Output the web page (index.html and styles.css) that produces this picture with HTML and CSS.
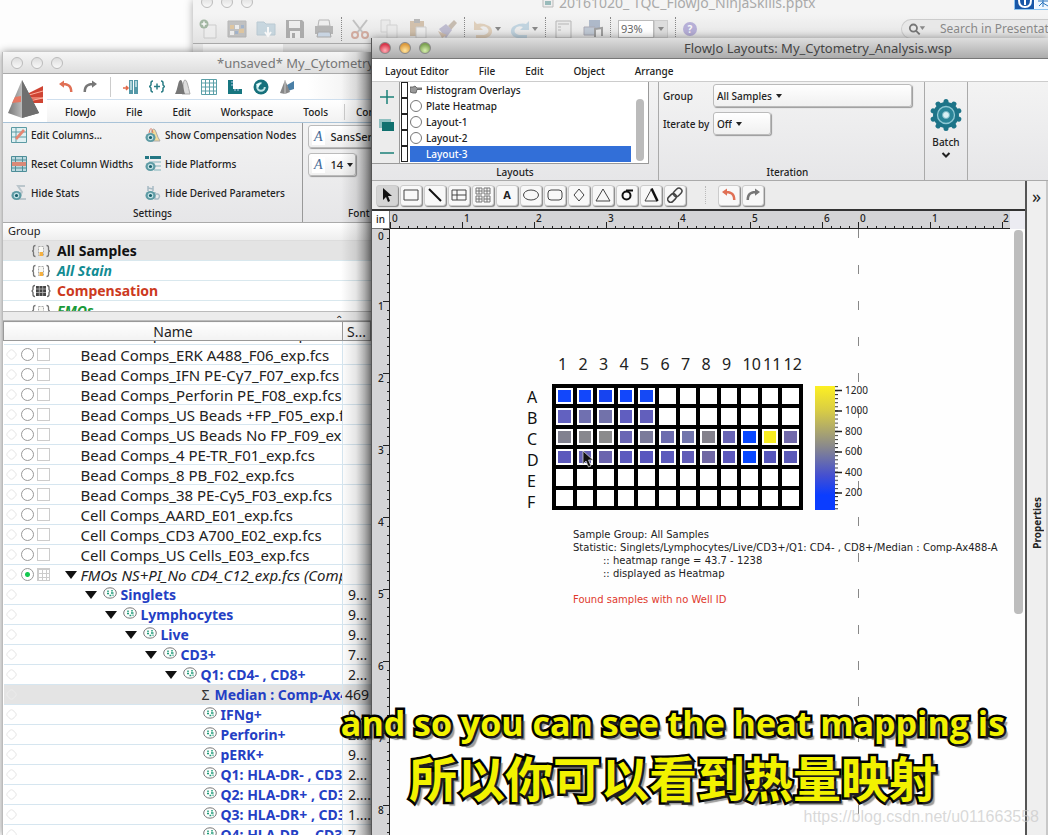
FILE: index.html
```html
<!DOCTYPE html>
<html lang="en">
<head>
<meta charset="utf-8">
<title>FlowJo Layouts: My_Cytometry_Analysis.wsp</title>
<link rel="stylesheet" href="styles.css">
</head>
<body>
<svg class="defs" aria-hidden="true">
  <linearGradient id="pyr" x1="0" x2="1"><stop offset="0" stop-color="#777"/><stop offset=".45" stop-color="#bbb"/><stop offset=".5" stop-color="#888"/><stop offset="1" stop-color="#555"/></linearGradient>
  <symbol id="undo" viewBox="0 0 16 16"><path d="M1 5l5-3.500v2.400c5 0 8.500 2.500 8.500 9h-2.500c0-4.500-2-6.500-6-6.500v2.300z" fill="#e07055"/></symbol>
  <symbol id="redo" viewBox="0 0 16 16"><path d="M15 5l-5-3.500v2.400c-5 0-8.500 2.500-8.500 9h2.500c0-4.500 2-6.500 6-6.500v2.300z" fill="#777"/></symbol>
  <symbol id="cell" viewBox="0 0 14 12"><ellipse cx="7" cy="6" rx="6.300" ry="5.200" fill="#fdfffe" stroke="#777"/><path d="M5 3.500v1.500M9 3v1.600M4 6.500h2M8 6h2.500M6.500 8.500h1.800M9.500 8.200h1" stroke="#1f9a78" stroke-width="1.500"/></symbol>
  <symbol id="tube" viewBox="0 0 20 14"><path d="M4.500 1.500q-2 0-2 2v2q0 1.500-1.500 1.500 1.500 0 1.500 1.500v2q0 2 2 2M15.500 1.500q2 0 2 2v2q0 1.500 1.500 1.500-1.500 0-1.500 1.500v2q0 2-2 2" fill="none" stroke="#777" stroke-width="1.300"/><path d="M7.500 2.500h5v9h-5z" fill="#f8f8f4" stroke="#aaa" stroke-dasharray="2 1"/><path d="M8.500 8h3.500v4h-3.500z" fill="#f5b040"/></symbol>
  <symbol id="plate" viewBox="0 0 20 14"><path d="M4 1.500q-2 0-2 2v2L1 7l1 1.500v2q0 2 2 2M16 1.500q2 0 2 2v2L19 7l-1 1.500v2q0 2-2 2" fill="none" stroke="#666" stroke-width="1.300"/><path d="M5 2h10v10H5z" fill="#444"/><path d="M5 5h10M5 8.500h10M8.300 2v10M11.700 2v10" stroke="#bbb" stroke-width=".8"/></symbol>
  <symbol id="eye" viewBox="0 0 12 12"><ellipse cx="6" cy="6" rx="5.500" ry="5" fill="#5d9ba4"/><circle cx="6" cy="6" r="3" fill="#c4e2e6"/><circle cx="6" cy="6" r="1.700" fill="#19606c"/></symbol>
  <symbol id="pyramid" viewBox="0 0 40 42"><path d="M20 16l16-8v17l-14 0z" fill="#cf4433"/><path d="M22 17l14-4M22 20h14M22 23l14-3" stroke="#ffb09c" stroke-width="1"/><path d="M15 2L1 35l14 5 17-5z" fill="url(#pyr)"/><path d="M15 2l0 38 17-5z" fill="#6f6f6f"/><path d="M8 19l6-1v6l-9 1z" fill="#e67863"/></symbol>
</svg>

<main class="desktop">
  <section class="window deck" aria-label="Presentation">
    <div class="deck-title"><i class="lights pale"><b></b><b></b><b></b></i><span class="deck-name"><svg width="14" height="12" viewBox="0 0 14 12"><path d="M2 0h10v10H2z" fill="#eee" stroke="#bbb"/><path d="M4 4h6v4H4z" fill="#9bb"/></svg>20161020_ TQC_FlowJo_NinjaSkills.pptx</span></div>
    <div class="deck-tools">
      <button aria-label="New"><svg width="18" height="20" viewBox="0 0 18 20"><path d="M5 6h12v13H5z" fill="#eee" stroke="#bbb"/><circle cx="5" cy="5" r="4.500" fill="#7b9a7b"/><path d="M5 2.500v5M2.500 5h5" stroke="#fff" stroke-width="1.500"/></svg></button>
      <button aria-label="Gallery"><svg width="20" height="20" viewBox="0 0 20 20"><path d="M1 2h18v16H1z" fill="#aaa" stroke="#999"/><path d="M3 6h4v4H3zM12 10h5v4h-5z" fill="#d8b27a"/><path d="M8 6h4v4H8zM3 12h4v4H3z" fill="#eee"/><path d="M14 6h3v3h-3zM8 12h3v3H8z" fill="#7c96b8"/></svg></button>
      <button aria-label="Open"><svg width="20" height="20" viewBox="0 0 20 20"><path d="M1 3h7l2 2h9v11H1z" fill="#b4cbd8" stroke="#a0b8c6"/><path d="M12 8v8M9 13l3 4 3-4" fill="none" stroke="#fff" stroke-width="2"/></svg></button>
      <button aria-label="Save"><svg width="20" height="20" viewBox="0 0 20 20"><path d="M1 1h16l2 2v16H1z" fill="#8c8c8c"/><path d="M4 2h11v7H4zM5 12h10v7H5z" fill="#eee"/><path d="M7 14h3v5H7z" fill="#888"/></svg></button>
      <button aria-label="Print"><svg width="20" height="20" viewBox="0 0 20 20"><path d="M5 1h10l1 6H4z" fill="#eee" stroke="#999"/><path d="M1 7h18v8H1z" fill="#999"/><path d="M4 13h12l1 5H3z" fill="#b9cbe0" stroke="#888"/></svg></button>
      <i class="dots"></i>
      <button aria-label="Cut"><svg width="20" height="20" viewBox="0 0 20 20"><path d="M3 1l10 13M17 1L7 14" stroke="#aaa" stroke-width="2"/><g fill="none" stroke="#c48a78" stroke-width="2"><circle cx="5" cy="16" r="3"/><circle cx="15" cy="16" r="3"/></g></svg></button>
      <button aria-label="Copy"><svg width="20" height="20" viewBox="0 0 20 20" fill="#e8e8e8" stroke="#c4c4c4"><path d="M2 1h9v12H2z"/><path d="M8 6h10v13H8z"/></svg></button>
      <button aria-label="Paste"><svg width="18" height="20" viewBox="0 0 18 20"><path d="M1 2h14v15H1z" fill="#c3a98a"/><path d="M5 0h6v4H5z" fill="#999"/><path d="M7 8h10v11H7z" fill="#eee" stroke="#bbb"/></svg></button>
      <button aria-label="Format"><svg width="20" height="20" viewBox="0 0 20 20"><path d="M11 7l6-6 3 3-6 7z" fill="#b2a290"/><path d="M2 10l7-5 6 6-6 8z" fill="#a6a2c0"/><path d="M1 12l9 4-5 3z" fill="#c4a88e"/></svg></button>
      <i class="dots"></i>
      <button aria-label="Undo"><svg width="20" height="20" viewBox="0 0 20 20"><path d="M1 2v9h9L7 8q6-2 8 2t-4 6H3v3h9c8-1 9-9 4-12S6 4 4 5z" fill="#d6bea0"/></svg></button><i class="tri"></i>
      <button aria-label="Redo"><svg width="20" height="20" viewBox="0 0 20 20"><path d="M19 2v9h-9l3-3q-6-2-8 2t4 6h8v3H8c-8-1-9-9-4-12s10-3 12-2z" fill="#a9c6d8"/></svg></button><i class="tri"></i>
      <i class="dots"></i>
      <button aria-label="Form"><svg width="18" height="20" viewBox="0 0 18 20"><path d="M1 2h15v17H1z" fill="#e8e8e8" stroke="#999"/><path d="M3 5h11M3 8h3M3 11h3" stroke="#999"/></svg></button>
      <button aria-label="Media"><svg width="20" height="20" viewBox="0 0 20 20"><path d="M6 1h11v9H6z" fill="#8c9db6"/><path d="M1 8h11v8H1z" fill="#a9b6c8" stroke="#889"/><path d="M12 18v-8l7-1v8" stroke="#777" fill="none" stroke-width="2"/></svg></button>
      <i class="dots"></i>
      <input class="percent" value="93%" aria-label="Zoom"><i class="percent-arrow"><i class="tri"></i></i>
      <i class="dots"></i>
      <button aria-label="Help" class="help">?</button>
      <label class="search"><svg width="20" height="14" viewBox="0 0 20 14"><circle cx="6" cy="6" r="4" fill="none" stroke="#777" stroke-width="2"/><path d="M9 9l4 4" stroke="#777" stroke-width="2"/><path d="M13 4h6l-3 4z" fill="#888"/></svg><input placeholder="Search in Presentation" aria-label="Search in Presentation"></label>
    </div>
    <div class="deck-tabs"></div>
  </section>

  <aside class="badge"><svg width="19" height="9" viewBox="0 0 19 9"><path d="M0 0h19v9H0z" fill="#1857a8"/><path d="M4 0q0 7 6 7t6-7M10 0v5" fill="none" stroke="#fff" stroke-width="2"/></svg><svg width="13" height="9" viewBox="0 0 13 9"><path d="M0 0h13v9H0z" fill="#eef7ff"/><path d="M3 1h10M8 0v7M8 2L4 6M8 3l5 3" stroke="#2a75bd" fill="none"/></svg></aside>

  <section class="window workspace" aria-label="Workspace">
    <header class="bar"><i class="lights pale"><b></b><b></b><b></b></i><h1>*unsaved* My_Cytometry_Analysis.wsp</h1></header>
    <div class="ws-top">
      <svg class="logo" viewBox="0 0 40 42"><use href="#pyramid"/></svg>
      <div class="ws-bars">
        <div class="quick">
          <button aria-label="Undo"><svg><use href="#undo"/></svg></button><button aria-label="Redo"><svg><use href="#redo"/></svg></button><i class="vline"></i>
          <button aria-label="Add samples"><svg viewBox="0 0 16 16"><path d="M6 1h4v14H6zM11 1h4v14h-4z" fill="#5599a8"/><path d="M8 2v9M13 2v6" stroke="#cfe7ec" stroke-width="1.500"/><path d="M0 9h4M3 7l2 2-2 2" stroke="#e26a4a" fill="none" stroke-width="1.500"/></svg></button>
          <button aria-label="Create group"><svg viewBox="0 0 16 16" fill="none" stroke="#2a7d85" stroke-width="1.500"><path d="M4 2Q2 2 2 4v2L.500 7.500 2 9v2q0 2 2 2M12 2q2 0 2 2v2l1.500 1.500L14 9v2q0 2-2 2M8 4.500v6M5 7.500h6"/></svg></button>
          <button aria-label="Histograms"><svg viewBox="0 0 16 16"><path d="M7 15C8 9 8 1 10 1s3 6 5 14z" fill="#ddd" stroke="#aaa"/><path d="M0 15C3 10 3 1 5.500 1S8 9 10 15z" fill="#777"/></svg></button>
          <button aria-label="Table"><svg viewBox="0 0 16 16" fill="none" stroke="#5ba0a8"><path d="M.500.500h15v15H.500zM.500 4h15M.500 8h15M.500 12h15M4.500.500v15M8.500.500v15M12.500.500v15"/></svg></button>
          <button aria-label="Layout"><svg viewBox="0 0 16 16"><path d="M1 1h5v9h9v5H1z" fill="#167680"/><path d="M6 3H4M6 6H4M8 10v2M11 10v2" stroke="#bce"/></svg></button>
          <button aria-label="Refresh"><svg viewBox="0 0 16 16"><circle cx="8" cy="8" r="7.500" fill="#16717c"/><circle cx="8" cy="8" r="3.800" fill="none" stroke="#bfe4e6" stroke-width="2" stroke-dasharray="18 6"/><path d="M3 5l5-1-3 5z" fill="#e8ffff"/></svg></button>
          <button aria-label="Preferences"><svg viewBox="0 0 16 16"><path d="M8 6l7-4v8l-6 2z" fill="#4b7fa6"/><path d="M6 1L1 14l5 1 5-2z" fill="#888"/><path d="M6 1v14" stroke="#ccc"/></svg></button>
        </div>
        <nav class="tabs"><a href="#">FlowJo</a><a href="#">File</a><a href="#">Edit</a><a href="#">Workspace</a><a href="#">Tools</a><a href="#" class="next">Configure</a></nav>
      </div>
    </div>
    <div class="ribbon ws-ribbon">
      <div class="settings">
        <div class="cmds">
          <button><svg viewBox="0 0 16 16"><path d="M.500.500h15v15H.500z" fill="#dff0f2" stroke="#5c9aa3"/><path d="M.500 5h15M.500 10h15M5 .500v15" stroke="#5c9aa3"/><path d="M4 11l8-9 2 2-8 9z" fill="#e58672"/></svg>Edit Columns...</button>
          <button><svg viewBox="0 0 16 16"><path d="M6 5q3-6 5 0t4 9H6z" fill="#f3dd9a" stroke="#aaa"/><path d="M4 6q2-9 4 0" fill="none" stroke="#d87a60"/><use href="#eye" y="5" width="11" height="11"/></svg>Show Compensation Nodes</button>
          <button><svg viewBox="0 0 16 16"><path d="M.500.500h15v15H.500z" fill="#bcd9df" stroke="#4e8e99"/><path d="M4.500.500v15M11.500.500v15M.500 4h15M.500 12h15" stroke="#4e8e99"/><path d="M1 6h14v4H1z" fill="#d98978"/></svg>Reset Column Widths</button>
          <button><svg viewBox="0 0 16 16"><path d="M0 0h4v3H0zM5 0h11v3H5z" fill="#247784"/><path d="M4 6h12M8 10h8M9 14h7" stroke="#7fb3bb"/><use href="#eye" y="5" width="11" height="11"/></svg>Hide Platforms</button>
          <button><svg viewBox="0 0 16 16"><path d="M14 1H7l4 6-4 7h8" fill="none" stroke="#bbc6cc" stroke-width="2"/><use href="#eye" y="5" width="11" height="11"/></svg>Hide Stats</button>
          <button><svg viewBox="0 0 16 16"><path d="M3 1v5M8 1v5M3 3l5 1M10 7v7h3q3-3 0-5h-2" fill="none" stroke="#a7bac4" stroke-width="1.500"/><use href="#eye" y="5" width="11" height="11"/></svg>Hide Derived Parameters</button>
        </div>
        <p class="caption">Settings</p>
      </div>
      <div class="fonts">
        <button class="box"><em>A</em>SansSerif</button>
        <button class="box small"><em>A</em>14<i class="tri"></i></button>
        <p class="caption">Font</p>
      </div>
    </div>
    <div class="groups">
      <p class="group-head">Group</p>
      <ul>
        <li class="on"><svg><use href="#tube"/></svg>All Samples</li>
        <li class="stain"><svg><use href="#tube"/></svg>All Stain</li>
        <li class="comp"><svg><use href="#plate"/></svg>Compensation</li>
        <li class="fmo"><svg><use href="#tube"/></svg>FMOs</li>
      </ul>
    </div>
    <div class="splitter">⌃</div>
    <div class="samples">
      <table>
        <colgroup><col class="c-name"><col></colgroup>
        <thead><tr><th>Name</th><th>S...</th></tr></thead>
        <tbody>
        <tr class="peek"><td><div class="cut"><span>Bead Comps_CD8 A700_F04_exp.fcs</span></div></td><td></td></tr>
        <tr><td><div><i class="gem"></i><input type="radio" aria-label="Select"><input type="checkbox" aria-label="Mark"><span>Bead Comps_ERK A488_F06_exp.fcs</span></div></td><td></td></tr>
        <tr><td><div><i class="gem"></i><input type="radio" aria-label="Select"><input type="checkbox" aria-label="Mark"><span>Bead Comps_IFN PE-Cy7_F07_exp.fcs</span></div></td><td></td></tr>
        <tr><td><div><i class="gem"></i><input type="radio" aria-label="Select"><input type="checkbox" aria-label="Mark"><span>Bead Comps_Perforin PE_F08_exp.fcs</span></div></td><td></td></tr>
        <tr><td><div><i class="gem"></i><input type="radio" aria-label="Select"><input type="checkbox" aria-label="Mark"><span>Bead Comps_US Beads +FP_F05_exp.fcs</span></div></td><td></td></tr>
        <tr><td><div><i class="gem"></i><input type="radio" aria-label="Select"><input type="checkbox" aria-label="Mark"><span>Bead Comps_US Beads No FP_F09_exp.fcs</span></div></td><td></td></tr>
        <tr><td><div><i class="gem"></i><input type="radio" aria-label="Select"><input type="checkbox" aria-label="Mark"><span>Bead Comps_4 PE-TR_F01_exp.fcs</span></div></td><td></td></tr>
        <tr><td><div><i class="gem"></i><input type="radio" aria-label="Select"><input type="checkbox" aria-label="Mark"><span>Bead Comps_8 PB_F02_exp.fcs</span></div></td><td></td></tr>
        <tr><td><div><i class="gem"></i><input type="radio" aria-label="Select"><input type="checkbox" aria-label="Mark"><span>Bead Comps_38 PE-Cy5_F03_exp.fcs</span></div></td><td></td></tr>
        <tr><td><div><i class="gem"></i><input type="radio" aria-label="Select"><input type="checkbox" aria-label="Mark"><span>Cell Comps_AARD_E01_exp.fcs</span></div></td><td></td></tr>
        <tr><td><div><i class="gem"></i><input type="radio" aria-label="Select"><input type="checkbox" aria-label="Mark"><span>Cell Comps_CD3 A700_E02_exp.fcs</span></div></td><td></td></tr>
        <tr><td><div><i class="gem"></i><input type="radio" aria-label="Select"><input type="checkbox" aria-label="Mark"><span>Cell Comps_US Cells_E03_exp.fcs</span></div></td><td></td></tr>
        <tr class="open"><td><div><i class="gem"></i><input type="radio" checked aria-label="Select"><input type="checkbox" class="mesh" aria-label="Mark"><i class="twist"></i><span>FMOs NS+PI_No CD4_C12_exp.fcs (Compensated)</span></div></td><td></td></tr>
        <tr class="pop d1"><td><div><i class="gem"></i><i class="twist"></i><svg><use href="#cell"/></svg><span>Singlets</span></div></td><td>9...</td></tr>
        <tr class="pop d2"><td><div><i class="gem"></i><i class="twist"></i><svg><use href="#cell"/></svg><span>Lymphocytes</span></div></td><td>9...</td></tr>
        <tr class="pop d3"><td><div><i class="gem"></i><i class="twist"></i><svg><use href="#cell"/></svg><span>Live</span></div></td><td>9...</td></tr>
        <tr class="pop d4"><td><div><i class="gem"></i><i class="twist"></i><svg><use href="#cell"/></svg><span>CD3+</span></div></td><td>7...</td></tr>
        <tr class="pop d5"><td><div><i class="gem"></i><i class="twist"></i><svg><use href="#cell"/></svg><span>Q1: CD4- , CD8+</span></div></td><td>2...</td></tr>
        <tr class="pop leaf stat"><td><div><i class="gem"></i><b class="sigma">Σ</b><span>Median : Comp-Ax488-A</span></div></td><td>469</td></tr>
        <tr class="pop leaf"><td><div><i class="gem"></i><svg><use href="#cell"/></svg><span>IFNg+</span></div></td><td>9...</td></tr>
        <tr class="pop leaf"><td><div><i class="gem"></i><svg><use href="#cell"/></svg><span>Perforin+</span></div></td><td>2...</td></tr>
        <tr class="pop leaf"><td><div><i class="gem"></i><svg><use href="#cell"/></svg><span>pERK+</span></div></td><td>9...</td></tr>
        <tr class="pop leaf"><td><div><i class="gem"></i><svg><use href="#cell"/></svg><span>Q1: HLA-DR- , CD38+</span></div></td><td>2...</td></tr>
        <tr class="pop leaf"><td><div><i class="gem"></i><svg><use href="#cell"/></svg><span>Q2: HLA-DR+ , CD38+</span></div></td><td>2....</td></tr>
        <tr class="pop leaf"><td><div><i class="gem"></i><svg><use href="#cell"/></svg><span>Q3: HLA-DR+ , CD38-</span></div></td><td>1....</td></tr>
        <tr class="pop leaf"><td><div><i class="gem"></i><svg><use href="#cell"/></svg><span>Q4: HLA-DR- , CD38-</span></div></td><td>7...</td></tr>
        </tbody>
      </table>
    </div>
  </section>

  <section class="window layouts" aria-label="Layout editor">
    <header class="bar active"><i class="lights"><b class="r"></b><b class="y"></b><b class="g"></b></i><h1>FlowJo Layouts: My_Cytometry_Analysis.wsp</h1></header>
    <nav class="menu"><a href="#">Layout Editor</a><a href="#">File</a><a href="#">Edit</a><a href="#">Object</a><a href="#">Arrange</a></nav>
    <div class="ribbon lay-ribbon">
      <div class="lay-group">
        <div class="lay-pick">
          <div class="lay-btns">
            <button aria-label="Add layout"><svg viewBox="0 0 16 16"><path d="M8 1v14M1 8h14" stroke="#1b8178" stroke-width="1.500"/></svg></button>
            <button aria-label="Duplicate layout"><svg viewBox="0 0 16 16"><path d="M0 2h12v9H0z" fill="#8fc0c0"/><path d="M3 5h12v9H3z" fill="#10706e"/></svg></button>
            <button aria-label="Remove layout"><svg viewBox="0 0 16 16"><path d="M1 8h14" stroke="#1b8178" stroke-width="1.500"/></svg></button>
          </div>
          <ul class="lay-list">
            <li><input type="checkbox" aria-label="Batch Histogram Overlays"><svg width="12" height="10" viewBox="0 0 12 10"><path d="M0 2h3l2-1 2 2h5v1.500H7L6 8H3L0 7z" fill="#999" stroke="#555" stroke-width=".8"/></svg>Histogram Overlays</li>
            <li><input type="checkbox" aria-label="Batch Plate Heatmap"><input type="radio" name="lay" aria-label="Plate Heatmap">Plate Heatmap</li>
            <li><input type="checkbox" aria-label="Batch Layout-1"><input type="radio" name="lay" aria-label="Layout-1">Layout-1</li>
            <li><input type="checkbox" aria-label="Batch Layout-2"><input type="radio" name="lay" aria-label="Layout-2">Layout-2</li>
            <li class="on"><input type="checkbox" aria-label="Batch Layout-3"><span>Layout-3</span></li>
          </ul>
          <i class="list-scroll"></i>
        </div>
        <p class="caption">Layouts</p>
      </div>
      <div class="iter-group">
        <div class="iter-form">
          <label for="grp">Group</label><span class="box wide"><select id="grp"><option>All Samples</option></select><i class="tri"></i></span>
          <label for="itr">Iterate by</label><span class="box narrow"><select id="itr"><option>Off</option></select><i class="tri"></i></span>
        </div>
        <p class="caption">Iteration</p>
      </div>
      <button class="batch"><svg width="34" height="34" viewBox="-17 -17 34 34"><circle r="13" fill="#1d7488"/><g stroke="#1d7488" stroke-width="5" stroke-linecap="round"><path id="t" d="M0-13.500v27"/><use href="#t" transform="rotate(36)"/><use href="#t" transform="rotate(72)"/><use href="#t" transform="rotate(108)"/><use href="#t" transform="rotate(144)"/></g><circle r="8.500" fill="#2a8598" stroke="#8fc8d4" stroke-width="1.300"/><circle r="3.500" fill="#d9f0f4" stroke="#77b6c4"/></svg>Batch<svg width="10" height="6" viewBox="0 0 10 6"><path d="M1.500 1L5 4.500 8.500 1" fill="none" stroke="#222" stroke-width="2"/></svg></button>
    </div>
    <div class="lay-main">
      <div class="editor">
        <div class="toolbar">
          <button class="on" aria-label="Pointer"><svg viewBox="0 0 16 16"><path d="M4 1v12l3-3 2 5 2-1-2-5h4z" fill="#111"/></svg></button>
          <button aria-label="Rectangle"><svg viewBox="0 0 16 16"><path d="M1 3h14v10H1z"/></svg></button>
          <button aria-label="Line"><svg viewBox="0 0 16 16"><path d="M2 2l12 12" stroke="#111" stroke-width="2"/></svg></button>
          <button aria-label="Table"><svg viewBox="0 0 16 16"><path d="M1 3h14v10H1zM1 8h14M6 3v10"/></svg></button>
          <button aria-label="Grid"><svg viewBox="0 0 16 16"><path d="M1 1h6v6H1zM9 1h6v6H9zM1 9h6v6H1zM9 9h6v6H9zM4 1v6M12 1v6M4 9v6M12 9v6M1 4h6M9 4h6M1 12h6M9 12h6" stroke="#777"/></svg></button>
          <button aria-label="Text" class="glyph">A</button>
          <button aria-label="Ellipse"><svg viewBox="0 0 16 16"><ellipse cx="8" cy="8" rx="7.500" ry="5"/></svg></button>
          <button aria-label="Rounded rectangle"><svg viewBox="0 0 16 16"><rect x="1" y="3" width="14" height="10" rx="3"/></svg></button>
          <button aria-label="Diamond"><svg viewBox="0 0 16 16"><path d="M8 2l5 6-5 6-5-6z"/></svg></button>
          <button aria-label="Triangle"><svg viewBox="0 0 16 16"><path d="M8 2l7 12H1z"/></svg></button>
          <button aria-label="Sigma"><svg viewBox="0 0 16 16"><circle cx="7.500" cy="8.500" r="4" stroke="#111" stroke-width="2"/><path d="M7 3.500h7" stroke="#111" stroke-width="2"/></svg></button>
          <button aria-label="Delta"><svg viewBox="0 0 16 16"><path d="M8.500 2L2 14h12.500z"/><path d="M8.500 1.500l6 12.500" stroke="#111" stroke-width="2.500"/></svg></button>
          <button aria-label="Link"><svg viewBox="0 0 16 16"><g transform="rotate(-45 8 8)"><rect x="-1" y="5" width="9.500" height="6" rx="3" stroke-width="1.500"/><rect x="7" y="5" width="9.500" height="6" rx="3" stroke-width="1.500"/></g></svg></button>
          <i class="gap"></i>
          <button aria-label="Undo"><svg><use href="#undo" stroke="none"/></svg></button>
          <button aria-label="Redo"><svg><use href="#redo" stroke="none"/></svg></button>
        </div>
        <div class="sheet">
          <span class="unit">in</span>
          <svg class="hruler">
            <defs><pattern id="hm" width="9" height="18" patternUnits="userSpaceOnUse"><path d="M.500 15v3" stroke="#222"/></pattern></defs>
            <rect width="100%" height="18" fill="url(#hm)"/>
            <path d="M.500 11v7M72.500 11v7M144.500 11v7M216.500 11v7M288.500 11v7M360.500 11v7M432.500 11v7M468.500 11v7M540.500 11v7M612.500 11v7M0 17.500h700" stroke="#222"/>
            <text x="2" y="11">0</text><text x="74" y="11">1</text><text x="146" y="11">2</text><text x="218" y="11">3</text><text x="290" y="11">4</text><text x="362" y="11">5</text><text x="434" y="11">6</text><text x="470" y="11">0</text><text x="542" y="11">1</text><text x="613" y="11">2</text>
          </svg>
          <i class="corner"></i>
          <svg class="vruler">
            <defs><pattern id="vm" width="18" height="9" patternUnits="userSpaceOnUse"><path d="M15 .500h3" stroke="#222"/></pattern></defs>
            <rect width="18" height="100%" fill="url(#vm)"/>
            <path d="M11 .500h7M11 72.500h7M11 144.500h7M11 216.500h7M11 288.500h7M11 360.500h7M11 432.500h7M11 504.500h7M11 576.500h7M17.500 0v900" stroke="#222"/>
            <text x="6" y="11">0</text><text x="6" y="81">1</text><text x="6" y="153">2</text><text x="6" y="225">3</text><text x="6" y="297">4</text><text x="6" y="369">5</text><text x="6" y="441">6</text><text x="6" y="513">7</text><text x="6" y="585">8</text>
          </svg>
          <div class="canvas">
            <i class="page-edge"></i>
            <figure class="heatmap">
              <div class="cols"><span>1</span><span>2</span><span>3</span><span>4</span><span>5</span><span>6</span><span>7</span><span>8</span><span>9</span><span>10</span><span>11</span><span>12</span></div>
              <div class="rows"><span>A</span><span>B</span><span>C</span><span>D</span><span>E</span><span>F</span></div>
              <div class="wells">
                <i style="--v:#1247fb"></i><i style="--v:#1247fb"></i><i style="--v:#1744f0"></i><i style="--v:#1247fb"></i><i style="--v:#1549f5"></i><i></i><i></i><i></i><i></i><i></i><i></i><i></i>
                <i style="--v:#6261c0"></i><i style="--v:#7070b0"></i><i style="--v:#7272aa"></i><i style="--v:#605ec0"></i><i style="--v:#625fbc"></i><i></i><i></i><i></i><i></i><i></i><i></i><i></i>
                <i style="--v:#81818f"></i><i style="--v:#88888e"></i><i style="--v:#8b8b8c"></i><i style="--v:#6a66b4"></i><i style="--v:#7b7b9a"></i><i style="--v:#6c6cae"></i><i style="--v:#7175ac"></i><i style="--v:#84828c"></i><i style="--v:#6864b4"></i><i style="--v:#0847ff"></i><i style="--v:#f8ec20"></i><i style="--v:#7169aa"></i>
                <i style="--v:#5c59bc"></i><i style="--v:#6562b4"></i><i style="--v:#6b64ae"></i><i style="--v:#5c5abe"></i><i style="--v:#5957be"></i><i style="--v:#5b5abc"></i><i style="--v:#605cb8"></i><i style="--v:#7068a4"></i><i style="--v:#5c58bc"></i><i style="--v:#0847ff"></i><i style="--v:#5555bc"></i><i style="--v:#5a59b8"></i>
                <i></i><i></i><i></i><i></i><i></i><i></i><i></i><i></i><i></i><i></i><i></i><i></i>
                <i></i><i></i><i></i><i></i><i></i><i></i><i></i><i></i><i></i><i></i><i></i><i></i>
              </div>
              <div class="scale"><i class="ramp"></i>
                <svg width="7" height="124" viewBox="0 0 7 124"><defs><pattern id="sm" y="4" width="7" height="4.080" patternUnits="userSpaceOnUse"><path d="M0 .500h3" stroke="#333"/></pattern></defs><path d="M0 0h7v124H0z" fill="url(#sm)"/><path d="M0 4.500h7M0 25h7M0 45.500h7M0 66h7M0 86.500h7M0 107h7" stroke="#222" stroke-width="1.500"/></svg>
                <div class="nums"><span>1200</span><span>1000</span><span>800</span><span>600</span><span>400</span><span>200</span></div>
              </div>
              <figcaption>
                <p>Sample Group: All Samples</p><p>Statistic: Singlets/Lymphocytes/Live/CD3+/Q1: CD4- , CD8+/Median : Comp-Ax488-A</p><p class="in">:: heatmap range = 43.7 - 1238</p><p class="in">:: displayed as Heatmap</p><p class="warn">Found samples with no Well ID</p>
              </figcaption>
            </figure>
            <svg class="pointer" width="12" height="18" viewBox="0 0 12 18"><path d="M1 1v13l3-3 2.500 6 2.500-1-2.500-6H11z" fill="#111" stroke="#ccc" stroke-width=".8"/></svg>
          </div>
          <i class="vscroll"></i>
        </div>
      </div>
      <aside class="props"><button aria-label="Expand">»</button><span>Properties</span></aside>
    </div>
  </section>

  <div class="subtitles"><p>and so you can see the heat mapping is</p><p class="zh" lang="zh">所以你可以看到热量映射</p></div>
  <span class="mark">https://blog.csdn.net/u011663558</span>
</main>
</body>
</html>
```
FILE: styles.css
```css
* { box-sizing: border-box; margin: 0; padding: 0; }
html, body { height: 100%; overflow: hidden; }
body { font: 10px/16px "Noto Sans", "Open Sans", sans-serif; color: #222; }
button, input, select { font: inherit; color: inherit; background: none; border: 0; appearance: none; }
button { display: flex; align-items: center; justify-content: center; }
ul { list-style: none; }
a { color: inherit; text-decoration: none; }
i, em { font-style: normal; }
.defs { position: absolute; width: 0; height: 0; }
.desktop { position: relative; height: 100vh; overflow: hidden; background: #fdfdfd; }
.window { position: absolute; overflow: hidden; display: flex; flex-direction: column; }
.tri { border: 3px solid transparent; border-top: 4px solid #222; border-bottom: 0; }
.vline { width: 1px; height: 20px; background: #ccc; }
.caption { text-align: center; line-height: 16px; }

.lights { display: flex; gap: 8px; }
.lights b { width: 12px; height: 12px; border-radius: 50%; border: 1px solid #888; }
.lights .r { background: radial-gradient(circle at 50% 75%, #ffb0b8, #d8354a 70%); }
.lights .y { background: radial-gradient(circle at 50% 75%, #ffe6a0, #dd9a3c 70%); }
.lights .g { background: radial-gradient(circle at 50% 75%, #d8f0b0, #7da352 70%); }
.lights.pale b { border-color: #bbb; background: linear-gradient(#ddd, #f8f8f8); }

/* presentation window */
.deck { left: 193px; right: 0; top: 0; bottom: 0; background: #ededed; box-shadow: 0 0 8px rgba(0,0,0,.35); color: #aaa; }
.deck-title { height: 14px; display: flex; align-items: flex-start; padding-left: 8px; background: #f4f4f4; }
.deck-title .lights { height: 8px; align-items: flex-end; }
.deck-name { display: flex; gap: 4px; align-items: center; margin-left: 288px; height: 6px; font-size: 14px; white-space: nowrap; }
.deck-tools { height: 30px; display: flex; align-items: center; gap: 8px; padding-left: 4px; background: linear-gradient(#f4f4f4, #e2e2e2); border-bottom: 1px solid #aaa; }
.deck-tools > * { flex: none; }
.deck-tools button { width: 21px; opacity: .65; }
.dots { width: 1px; height: 24px; margin: 0 -1px; border-left: 1px dotted #888; }
.deck-tools .tri { margin-left: -6px; border-top-color: #888; }
.percent { width: 36px; height: 18px; background: #fff; border: 1px solid #bbb; color: #666; padding-left: 2px; font-size: 11px; }
.percent-arrow { width: 14px; height: 18px; margin-left: -8px; background: #ddd; border: 1px solid #ccc; display: flex; align-items: center; justify-content: center; }
.percent-arrow .tri { margin: 0; }
.deck-tools .help { width: 14px; height: 14px; border-radius: 50%; background: #9a8fcc; color: #fff; font-weight: bold; }
.search { margin-left: auto; width: 147px; height: 20px; display: flex; align-items: center; gap: 14px; padding-left: 6px; border: 1px solid #ccc; border-right: 0; border-radius: 10px 0 0 10px; background: #e8e8e8; }
.search input { width: 108px; font-size: 12px; }
.search input::placeholder { color: #8a8a8a; }
.deck-tabs { height: 8px; background: linear-gradient(90deg, #e8e8e8 10px, #f6f6f6 10px 90px, #e4e4e4 90px); }
.badge { position: absolute; right: 0; top: 0; display: flex; gap: 1px; border: 1px solid #8cc4f0; border-top: 0; border-right: 0; background: #fff; }

/* workspace window */
.workspace { left: 2px; top: 52px; bottom: 0; width: 369px; background: #fff; border-left: 1px solid #bbb; box-shadow: 0 0 8px rgba(0,0,0,.45); }
.workspace::after { content: ""; position: absolute; right: 0; top: 0; bottom: 0; width: 30px; background: linear-gradient(90deg, transparent, rgba(0,0,0,.1) 50%, rgba(0,0,0,.45)); pointer-events: none; }
.bar { flex: none; height: 22px; display: flex; align-items: center; padding-left: 8px; background: linear-gradient(#f6f6f6, #dedede); border-bottom: 1px solid #aaa; }
.bar h1 { font-size: 13px; font-weight: normal; color: #777; white-space: nowrap; }
.workspace .bar h1 { margin-left: 154px; }
.ws-top { flex: none; height: 49px; display: flex; background: #fff; border-bottom: 1px solid #a9c3d8; }
.logo { width: 40px; height: 42px; margin: 4px 0 0 4px; flex: none; }
.ws-bars { flex: 1; min-width: 0; }
.quick { height: 26px; display: flex; align-items: center; gap: 10px; padding-left: 11px; border-bottom: 1px solid #cfdfee; background: linear-gradient(90deg, #fff 260px, #ededed); }
.quick button { width: 16px; }
.quick svg { width: 16px; height: 16px; flex: none; }
.quick .vline { margin: 0 2px; }
.quick button:first-child { margin-right: -2px; }
.tabs { height: 22px; display: flex; align-items: center; padding: 1px 0 0 18px; font-weight: 500; background: linear-gradient(#fff, #f2f2f2); }
.tabs a { flex: none; margin-right: 30px; }
.tabs .next { margin-left: -14px; border-left: 1px solid #ccc; padding-left: 11px; }
.ribbon { flex: none; height: 100px; display: flex; background: linear-gradient(#f3f3f3, #e6e6e8); border-bottom: 1px solid #aaa; font-weight: 500; }
.settings { width: 300px; flex: none; display: flex; flex-direction: column; justify-content: space-between; border-right: 1px solid #999; padding-bottom: 1px; }
.cmds { display: grid; grid-template-columns: 134px 1fr; grid-auto-rows: 23px; row-gap: 6px; padding-left: 8px; }
.cmds button { justify-content: flex-start; gap: 4px; white-space: nowrap; }
.cmds svg { width: 16px; height: 16px; flex: none; }
.fonts { flex: 1; display: flex; flex-direction: column; align-items: flex-start; gap: 5px; padding: 2px 0 1px 5px; overflow: hidden; }
.fonts .caption { margin: auto 0 0 40px; }
.box { height: 23px; display: flex; align-items: center; gap: 4px; border: 1px solid #bbb; border-radius: 3px; background: linear-gradient(#fff, #f0f0f0); box-shadow: 1px 1px 1px #999; padding-left: 3px; }
.fonts .box { width: 90px; justify-content: flex-start; gap: 6px; font-size: 11px; }
.fonts .small { width: 48px; }
.fonts .small .tri { margin-left: -2px; }
.box em { font: italic 14px/16px "Liberation Serif", serif; color: #446a96; padding: 0 2px; background: #fff; }
.groups { flex: none; height: 88px; overflow: hidden; }
.group-head { height: 18px; padding-left: 5px; font-size: 11px; background: linear-gradient(#fff, #eee); border-bottom: 1px solid #ddd; }
.groups li { height: 20px; display: flex; align-items: center; gap: 6px; padding-left: 28px; border-bottom: 1px solid #d9e8ee; font-size: 14px; font-weight: bold; color: #111; }
.groups li svg { width: 20px; height: 14px; }
.groups .on { background: #e4e4e4; }
.groups .stain { color: #128b92; font-style: italic; }
.groups .comp { color: #cc3a1e; }
.groups .fmo { color: #1a9a3a; font-style: italic; }
.splitter { flex: none; height: 10px; background: #ececec; border: solid #bbb; border-width: 1px 0; line-height: 14px; padding-left: 332px; overflow: hidden; }
.samples { flex: 1; overflow: hidden; font-size: 14px; }
table { width: 100%; table-layout: fixed; border-collapse: collapse; }
.c-name { width: 339px; }
th { height: 19px; line-height: 17px; font-weight: 400; background: linear-gradient(#fff, #f2f2f2); border: 1px solid #999; }
th:last-child { text-align: left; padding-left: 4px; }
td { height: 20px; line-height: 18px; border-bottom: 1px solid #d6e6f0; overflow: hidden; white-space: nowrap; }
td + td { border-left: 1px solid #d6e6f0; padding-left: 5px; }
td div { display: flex; align-items: center; height: 19px; overflow: hidden; font-size: 15px; }
td div > * { flex: none; }
.peek td, .peek .cut { height: 3px; line-height: 22px; }
.peek .cut { align-items: flex-end; padding-left: 77px; }
.gem { width: 9px; height: 9px; margin: 0 8px 0 3px; border: 1px solid #eaeaea; border-radius: 3px; transform: rotate(45deg); }
td input[type=radio] { width: 13px; height: 13px; border: 1px solid #999; border-radius: 50%; margin-left: -3px; }
td input[type=radio]:checked { background: radial-gradient(circle, #14c850 2px, transparent 3px); }
td input[type=checkbox] { width: 13px; height: 13px; border: 1px solid #ccc; margin: 0 31px 0 3px; }
.open input.mesh { background: repeating-linear-gradient(#ccc 0 1px, transparent 1px 4px), repeating-linear-gradient(90deg, #ccc 0 1px, transparent 1px 4px); margin-right: 15px; }
.open span { font-style: italic; }
.twist { border: 6px solid transparent; border-top: 8px solid #111; border-bottom: 0; }
.open .twist { margin-right: 4px; }
.pop div { color: #2440c4; font-weight: bold; font-size: 14px; }
.pop svg { width: 14px; height: 12px; margin: 0 4px 3px 6px; }
.d1 .twist { margin-left: 61px; }
.d2 .twist { margin-left: 81px; }
.d3 .twist { margin-left: 101px; }
.d4 .twist { margin-left: 121px; }
.d5 .twist { margin-left: 141px; }
.leaf svg { margin-left: 179px; }
.stat { background: #e4e4e4; }
.stat td + td { padding-left: 2px; }
.sigma { width: 12px; margin-left: 178px; margin-right: 1px; font-weight: normal; color: #333; }

/* layout editor window */
.layouts { left: 371px; right: 0; top: 38px; bottom: 0; background: #ececec; border-left: 1px solid #555; box-shadow: 0 0 8px rgba(0,0,0,.4); }
.layouts .bar { height: 21px; padding-left: 7px; background: linear-gradient(#dedede, #acacac); border-bottom: 1px solid #777; position: relative; }
.layouts .bar h1 { position: absolute; left: 0; right: 0; text-align: center; padding-left: 216px; color: #444; }
.menu { flex: none; height: 23px; display: flex; align-items: center; gap: 30px; padding: 1px 0 0 13px; background: #fff; border-bottom: 1px solid #ccc; font-weight: 500; }
.lay-ribbon { height: 99px; }
.lay-group { width: 287px; border-right: 1px solid #aaa; display: flex; flex-direction: column; justify-content: space-between; }
.lay-pick { display: flex; height: 82px; margin-right: 9px; border-right: 1px solid #999; border-bottom: 1px solid #999; background: #fff; }
.lay-btns { width: 28px; flex: none; display: flex; flex-direction: column; justify-content: space-between; padding: 7px 0 2px 7px; background: #ececec; border-right: 1px solid #999; }
.lay-btns svg { width: 16px; height: 16px; }
.lay-btns button { width: 16px; }
.lay-list { flex: 1; overflow: hidden; }
.lay-list li { display: flex; align-items: center; height: 16px; gap: 4px; }
.lay-list input[type=checkbox] { width: 7px; height: 16px; border: 1px solid #222; margin-left: 1px; }
.lay-list input[type=radio] { width: 12px; height: 12px; border: 1px solid #777; border-radius: 50%; margin-left: -2px; }
.lay-list svg { margin-left: -2px; }
.lay-list .on { gap: 2px; }
.lay-list .on span { flex: 1; background: #326fd8; color: #fff; padding-left: 16px; }
.list-scroll { width: 8px; height: 62px; margin: 17px 4px 0 5px; border-radius: 4px; background: #bbb; }
.iter-group { width: 266px; flex: none; padding: 2px 12px 0 4px; border-right: 1px solid #aaa; display: flex; flex-direction: column; justify-content: space-between; }
.iter-form { display: grid; grid-template-columns: 48px 1fr; column-gap: 2px; row-gap: 5px; align-items: center; white-space: nowrap; }
.narrow { width: 58px; }
.batch { width: 43px; flex: none; flex-direction: column; gap: 2px; padding-bottom: 6px; border-right: 1px solid #aaa; font-weight: 500; }
.lay-main { flex: 1; min-height: 0; display: flex; }
.editor { flex: 1; min-width: 0; display: flex; flex-direction: column; border-right: 2px solid #555; }
.toolbar { flex: none; height: 28px; display: flex; align-items: center; gap: 2px; padding-left: 4px; background: #ececec; }
.toolbar button { width: 22px; height: 21px; border: 1px solid #ccc; border-radius: 3px; background: #f8f8f8; box-shadow: 1px 1px 1px #888; }
.toolbar .on { background: #d4d4d4; }
.toolbar svg { width: 16px; height: 16px; fill: none; stroke: #444; stroke-width: 1; }
.toolbar .on svg { stroke: none; }
.toolbar .glyph { font-weight: bold; font-size: 11px; }
.gap { width: 18px; height: 18px; border-right: 1px dotted #bbb; margin-right: 10px; }
.sheet { flex: 1; min-height: 0; display: grid; grid-template: 18px 1fr / 18px 1fr 15px; border-top: 2px solid #333; background: #fefefe; }
.unit { background: #fff; border: solid #777; border-width: 0 1px 1px 0; padding-left: 4px; font-weight: 500; }
.hruler { width: 100%; height: 18px; background: #d4d4d6; }
.vruler { width: 18px; height: 100%; background: #d4d4d6; }
.hruler text, .vruler text { font-size: 10px; font-weight: 500; fill: #222; }
.corner { background: #ececf2; }
.vscroll { width: 9px; height: 384px; margin: 1px 0 0 4px; border-radius: 4px; background: #bdbdbd; }
.canvas { position: relative; overflow: hidden; }
.page-edge { position: absolute; left: 468px; top: 0; bottom: 0; width: 1px; background: repeating-linear-gradient(#888 0 9px, transparent 9px 36px); }
.heatmap { position: absolute; left: 137px; top: 125px; display: grid; grid-template: 30px 126px auto / 25px 251px 1fr; }
.cols { grid-column: 2; display: grid; grid-template-columns: repeat(12, 1fr); padding: 0 0 0 6px; margin-right: -1px; font-size: 16px; line-height: 20px; }
.rows { grid-row: 2; display: grid; grid-template-rows: repeat(6, 1fr); margin: 3px 0 -3px; font-size: 16px; line-height: 21px; color: #111; }
.wells { grid-row: 2; display: grid; grid-template: repeat(6, 1fr) / repeat(12, 1fr); gap: 4px; padding: 4px; background: #000; }
.wells i { border: 2px solid #fff; background: var(--v, #fff); }
.scale { grid-row: 2; display: flex; padding: 2px 0 0 12px; }
.ramp { width: 20px; height: 124px; background: linear-gradient(#fdf022, #d8cc45 20%, #86868f 50%, #4550d0 72%, #0b3dff 88%); }
.nums { display: flex; flex-direction: column; justify-content: space-between; height: 118px; margin: -4px 0 0 3px; font-size: 10px; line-height: 16px; }
figcaption { grid-column: 1 / -1; padding: 18px 0 0 46px; font: 10px/13px "DejaVu Sans", sans-serif; white-space: nowrap; }
.in { padding-left: 30px; }
.warn { color: #e0392c; margin-top: 13px; }
.pointer { position: absolute; left: 192px; top: 221px; }
.props { width: 21px; flex: none; display: flex; flex-direction: column; align-items: center; background: #efefef; border-right: 2px solid #c8c8c8; }
.props button { height: 30px; font-size: 18px; }
.props span { writing-mode: vertical-rl; transform: rotate(180deg); font-weight: bold; margin: auto; }

/* captions over the whole desktop */
.subtitles { position: absolute; left: 0; right: 0; bottom: 29px; padding-left: 298px; text-align: center; color: #f2f200; }
.subtitles p { font: bold 34px/46px "Open Sans", "Noto Sans", sans-serif; white-space: nowrap; paint-order: stroke fill; -webkit-text-stroke: 5px #000; text-shadow: 4px 4px 1px rgba(60,60,60,.5); }
.subtitles .zh { font: bold 48px/60px "Noto Sans CJK SC", sans-serif; }
.mark { position: absolute; right: 9px; bottom: 8px; font: 16px/20px "Liberation Sans", sans-serif; color: rgba(200,200,200,.7); }
```
